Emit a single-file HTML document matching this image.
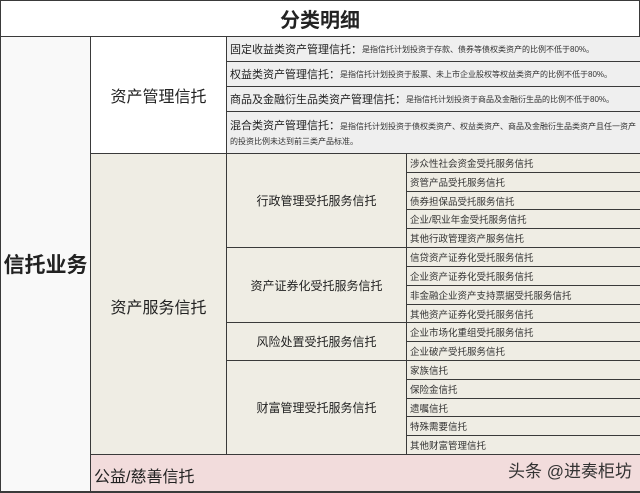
<!DOCTYPE html>
<html><head><meta charset="utf-8"><style>
*{margin:0;padding:0;box-sizing:border-box}
body{width:640px;height:493px;overflow:hidden;background:#fff;position:relative;font-family:"Liberation Sans","Noto Sans CJK SC",sans-serif;color:#222}
.b{position:absolute;border:1px solid #3a3a3a;display:flex;align-items:center;overflow:hidden;white-space:nowrap}
.c{justify-content:center}
.s{font-size:9.5px;padding-left:3px;background:#efede4;color:#333}
.t{font-size:11px;padding-left:3px;background:#efefef;color:#222}
.t span{font-size:8px;color:#333}
</style></head><body>
<div class="b c" style="left:0;top:0;width:640px;height:38px;font-size:20px;font-weight:bold;background:#fff;border-width:1px 1px 2px 1px">分类明细</div>
<div class="b c" style="left:0;top:37px;width:92px;height:456px;background:#f9f9f9;font-size:21px;font-weight:bold;border-width:0 2px 2px 1px">信托业务</div>
<div class="b c" style="left:91px;top:37px;width:137px;height:118px;background:#fff;font-size:16px;border-width:0 2px 2px 0">资产管理信托</div>
<div class="b t" style="left:227px;top:37px;width:413px;height:26px;border-width:0 0 2px 0">固定收益类资产管理信托：<span>是指信托计划投资于存款、债券等债权类资产的比例不低于80%。</span></div>
<div class="b t" style="left:227px;top:62px;width:413px;height:26px;border-width:0 0 2px 0">权益类资产管理信托：<span>是指信托计划投资于股票、未上市企业股权等权益类资产的比例不低于80%。</span></div>
<div class="b t" style="left:227px;top:87px;width:413px;height:26px;border-width:0 0 2px 0">商品及金融衍生品类资产管理信托：<span>是指信托计划投资于商品及金融衍生品的比例不低于80%。</span></div>
<div class="b t" style="left:227px;top:112px;width:413px;height:43px;border-width:0 0 2px 0;white-space:normal;display:block;padding-top:7px;line-height:14px">混合类资产管理信托：<span>是指信托计划投资于债权类资产、权益类资产、商品及金融衍生品类资产且任一资产的投资比例未达到前三类产品标准。</span></div>
<div class="b c" style="left:91px;top:154px;width:137px;height:302px;background:#efede4;font-size:16px;border-width:0 2px 2px 0;align-items:flex-start;padding-top:140px">资产服务信托</div>
<div class="b c" style="left:227px;top:154px;width:181px;height:95px;background:#efede4;font-size:12px;border-width:0 2px 2px 0">行政管理受托服务信托</div>
<div class="b c" style="left:227px;top:248px;width:181px;height:76px;background:#efede4;font-size:12px;border-width:0 2px 2px 0">资产证券化受托服务信托</div>
<div class="b c" style="left:227px;top:323px;width:181px;height:39px;background:#efede4;font-size:12px;border-width:0 2px 2px 0">风险处置受托服务信托</div>
<div class="b c" style="left:227px;top:361px;width:181px;height:95px;background:#efede4;font-size:12px;border-width:0 2px 2px 0">财富管理受托服务信托</div>
<div class="b s" style="left:407px;top:154px;width:233px;height:20px;border-width:0 0 2px 0">涉众性社会资金受托服务信托</div>
<div class="b s" style="left:407px;top:173px;width:233px;height:20px;border-width:0 0 2px 0">资管产品受托服务信托</div>
<div class="b s" style="left:407px;top:192px;width:233px;height:19px;border-width:0 0 2px 0">债券担保品受托服务信托</div>
<div class="b s" style="left:407px;top:210px;width:233px;height:20px;border-width:0 0 2px 0">企业/职业年金受托服务信托</div>
<div class="b s" style="left:407px;top:229px;width:233px;height:20px;border-width:0 0 2px 0">其他行政管理资产服务信托</div>
<div class="b s" style="left:407px;top:248px;width:233px;height:20px;border-width:0 0 2px 0">信贷资产证券化受托服务信托</div>
<div class="b s" style="left:407px;top:267px;width:233px;height:20px;border-width:0 0 2px 0">企业资产证券化受托服务信托</div>
<div class="b s" style="left:407px;top:286px;width:233px;height:20px;border-width:0 0 2px 0">非金融企业资产支持票据受托服务信托</div>
<div class="b s" style="left:407px;top:305px;width:233px;height:19px;border-width:0 0 2px 0">其他资产证券化受托服务信托</div>
<div class="b s" style="left:407px;top:323px;width:233px;height:20px;border-width:0 0 2px 0">企业市场化重组受托服务信托</div>
<div class="b s" style="left:407px;top:342px;width:233px;height:20px;border-width:0 0 2px 0">企业破产受托服务信托</div>
<div class="b s" style="left:407px;top:361px;width:233px;height:20px;border-width:0 0 2px 0">家族信托</div>
<div class="b s" style="left:407px;top:380px;width:233px;height:20px;border-width:0 0 2px 0">保险金信托</div>
<div class="b s" style="left:407px;top:399px;width:233px;height:19px;border-width:0 0 2px 0">遗嘱信托</div>
<div class="b s" style="left:407px;top:417px;width:233px;height:20px;border-width:0 0 2px 0">特殊需要信托</div>
<div class="b s" style="left:407px;top:436px;width:233px;height:20px;border-width:0 0 2px 0">其他财富管理信托</div>
<div class="b" style="left:91px;top:455px;width:549px;height:38px;background:#f2dcdc;font-size:16px;padding-left:3px;border-width:0 0 2px 0;padding-top:4px">公益/慈善信托</div>
<div style="position:absolute;left:508px;top:457px;font-size:17px;color:#333;white-space:nowrap">头条 @进奏柜坊</div>
</body></html>
